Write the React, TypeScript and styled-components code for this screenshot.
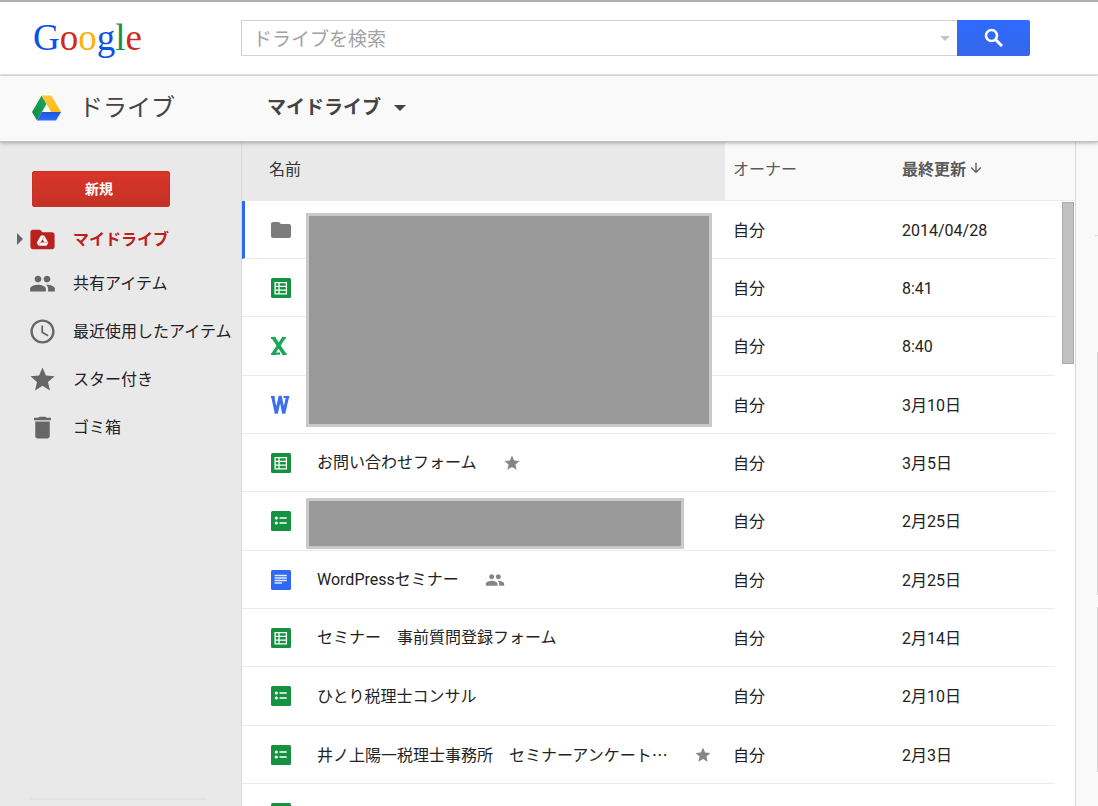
import React from "react";
import styled, { createGlobalStyle, css } from "styled-components";
import {
  MdAccessTime,
  MdArrowDownward,
  MdDelete,
  MdFolder,
  MdPeople,
  MdStar,
} from "react-icons/md";

const jp = `"Noto Sans CJK JP", sans-serif`;
const line = "#ebebeb";

const GlobalStyle = createGlobalStyle`
  *, *::before, *::after { box-sizing: border-box; }
  body {
    margin: 0;
    font: 16px/24px Roboto, ${jp};
    color: #222;
    background: #fff;
  }
  button, input { font: inherit; margin: 0; padding: 0; border: 0; background: none; }
  button { cursor: pointer; }
  svg { display: block; flex: none; }
`;

const Page = styled.div`
  display: flex;
  flex-direction: column;
  height: 100vh;
  overflow: hidden;
`;

/* ---------- top bar ---------- */

const TopBar = styled.header`
  display: flex;
  align-items: center;
  flex: none;
  height: 76px;
  padding: 0 68px 0 33px;
  border-top: 2px solid #b0b0b0;
  border-bottom: 2px solid #e6e6e6;
`;

const Logo = styled.a`
  width: 208px;
  flex: none;
  font: 37px/40px "Liberation Serif", serif;
  text-decoration: none;
`;

const Letter = styled.span<{ $color: string }>`
  color: ${(p) => p.$color};
`;

const SearchForm = styled.form`
  display: flex;
  flex: 1;
  height: 36px;
`;

const SearchBox = styled.div`
  display: flex;
  align-items: center;
  flex: 1;
  min-width: 0;
  border: 1px solid #d2d2d2;
  border-right: 0;
`;

const SearchInput = styled.input`
  flex: 1;
  min-width: 0;
  height: 34px;
  padding: 0 0 0 11px;
  font: 19px/34px ${jp};
  color: #222;
  outline: 0;
  &::placeholder { color: #a3a3a3; opacity: 1; }
`;

const SearchOptions = styled.button`
  display: flex;
  align-items: center;
  justify-content: center;
  width: 24px;
  height: 34px;
`;

const SearchButton = styled.button`
  display: flex;
  align-items: center;
  justify-content: center;
  width: 73px;
  color: #fff;
  border-radius: 0 2px 2px 0;
  background: linear-gradient(#2f6bff, #3567e8);
`;

const Caret = styled.span<{ $size: number; $color: string }>`
  border: ${(p) => p.$size}px solid transparent;
  border-top-color: ${(p) => p.$color};
  border-bottom: 0;
`;

/* ---------- product bar ---------- */

const ProductBar = styled.div`
  position: relative;
  z-index: 2;
  display: flex;
  align-items: center;
  flex: none;
  height: 66px;
  padding: 0 32px 2px;
  background: #f9f9f9;
  border-bottom: 1px solid #c0c0c0;
  box-shadow: 0 1px 4px rgba(0, 0, 0, 0.3);
`;

const Product = styled.a`
  display: flex;
  align-items: center;
  gap: 18px;
  width: 235px;
  font: 24px/32px ${jp};
  color: #444;
  text-decoration: none;
`;

const FolderButton = styled.button`
  display: flex;
  align-items: center;
  gap: 13px;
  font: bold 19px/32px ${jp};
  color: #444;
`;

/* Lifts a Japanese label slightly so that it centres on the icon beside it. */
const Label = styled.span`
  padding-bottom: 3px;
`;

/* ---------- body ---------- */

const Body = styled.div`
  display: flex;
  flex: 1;
  min-height: 0;
`;

const Sidebar = styled.aside`
  display: flex;
  flex-direction: column;
  flex: none;
  width: 242px;
  padding: 29px 0 6px;
  background: #e9e9e9;
  border-right: 1px solid #d9d9d9;
`;

const NewButton = styled.button`
  flex: none;
  width: 138px;
  height: 36px;
  margin: 0 0 12px 32px;
  padding: 0 4px 2px 0;
  font: bold 14px/32px ${jp};
  color: #fff;
  border-radius: 2px;
  border: 1px solid #c63226;
  background: linear-gradient(#d83528, #c53226);
`;

const NavLink = styled.a<{ $active?: boolean }>`
  display: flex;
  align-items: center;
  height: ${(p) => (p.$active ? 40 : 48)}px;
  padding-left: 28px;
  font-family: ${jp};
  white-space: nowrap;
  text-decoration: none;
  color: #222;
  ${(p) =>
    p.$active &&
    css`
      padding-left: 17px;
      color: #b9211c;
      font-weight: bold;
    `}
`;

const Expander = styled.span`
  width: 6px;
  margin-right: 5px;
  border: 6px solid transparent;
  border-left-color: #666;
  border-right: 0;
`;

const NavIcon = styled.span<{ $active?: boolean }>`
  display: flex;
  justify-content: center;
  width: 29px;
  margin-right: 16px;
  color: ${(p) => (p.$active ? "#b9211c" : "#666")};
`;

const SidebarRule = styled.hr`
  width: 175px;
  height: 2px;
  margin: auto 0 0 30px;
  border: 0;
  background: #e1e1e1;
`;

/* ---------- file list ---------- */

const ListPane = styled.main`
  position: relative;
  flex: 1;
  min-width: 0;
  overflow: hidden;
`;

const FileTable = styled.table`
  width: 100%;
  table-layout: fixed;
  border-collapse: separate;
  border-spacing: 0;
`;

const OwnerCol = styled.col`
  width: 169px;
`;
const DateCol = styled.col`
  width: 161px;
`;
const GutterCol = styled.col`
  width: 20px;
`;

const HeadCell = styled.th<{ $name?: boolean; $sorted?: boolean }>`
  height: 59px;
  padding: 0 0 6px ${(p) => (p.$name ? 27 : 8)}px;
  text-align: left;
  font-family: ${jp};
  font-weight: ${(p) => (p.$sorted ? "bold" : "normal")};
  color: ${(p) => (p.$name ? "#333" : "#5a5a5a")};
  background: ${(p) => (p.$name ? "#e9e9e9" : "#f9f9f9")};
  border-bottom: 1px solid ${line};
`;

const SortLabel = styled.span`
  display: flex;
  align-items: center;
  gap: 2px;
`;

const Cell = styled.td`
  padding: 2px 0 0 8px;
  border-bottom: 1px solid ${line};
`;

const NameCell = styled(Cell)`
  position: relative;
  padding: 0 0 0 27px;
`;

const FileRow = styled.tr<{ $selected?: boolean }>`
  height: 58px;
  &:nth-child(3n) { height: 59px; }
  ${(p) =>
    p.$selected &&
    css`
      ${NameCell} {
        border-left: 3px solid #2e68f0;
        padding-left: 24px;
      }
    `}
`;

const FileLine = styled.div`
  display: flex;
  align-items: center;
  white-space: nowrap;
`;

const FileIcon = styled.span`
  display: flex;
  justify-content: center;
  flex: none;
  width: 24px;
  margin-right: 24px;
  color: #7c7c7c;
`;

const FileName = styled.span`
  padding-top: 1px;
`;

const Badge = styled.span`
  margin-left: 26px;
  color: #858585;
`;

const Ellipsis = styled.span`
  font-family: ${jp};
`;

const Mask = styled.div<{ $left: number; $top: number; $w: number; $h: number }>`
  position: absolute;
  z-index: 1;
  left: ${(p) => p.$left}px;
  top: ${(p) => p.$top}px;
  width: ${(p) => p.$w}px;
  height: ${(p) => p.$h}px;
  background: #999;
  border: 3px solid #cacaca;
`;

const ScrollThumb = styled.div`
  position: absolute;
  top: 60px;
  right: 1px;
  width: 12px;
  height: 162px;
  background: #c1c1c1;
  border: 1px solid #aaa;
`;

/* ---------- details pane ---------- */

const Details = styled.aside`
  flex: none;
  width: 23px;
  padding-top: 93px;
  overflow: hidden;
  background: #f9f9f9;
  border-left: 1px solid #d9d9d9;
`;

const DetailsRule = styled.hr`
  height: 1px;
  margin: 0 0 116px 19px;
  border: 0;
  background: #ddd;
`;

const DetailsCard = styled.div<{ $h: number }>`
  height: ${(p) => p.$h}px;
  margin: 0 0 12px 21px;
  background: #d6d6d6;
`;

/* ---------- drawings ---------- */

const SearchIcon = () => (
  <svg width="20" height="20" viewBox="0 0 20 20" aria-hidden="true">
    <g fill="none" stroke="currentColor" strokeWidth="2.600">
      <circle cx="7.500" cy="7.500" r="5.500" />
      <path d="M11.500 11.500 18 18" strokeWidth="3.100" />
    </g>
  </svg>
);

const DriveLogo = () => (
  <svg width="29" height="26" viewBox="0 0 29 26" aria-hidden="true">
    <defs>
      <linearGradient id="dg" x1="0" y1="1" x2="1" y2="0">
        <stop offset="0" stopColor="#0a8a43" />
        <stop offset="1" stopColor="#22a858" />
      </linearGradient>
      <linearGradient id="db" x1="0" y1="0" x2="0" y2="1">
        <stop offset="0" stopColor="#1f55d8" />
        <stop offset="1" stopColor="#2f6bff" />
      </linearGradient>
      <linearGradient id="dy" x1="0" y1="0" x2="1" y2="1">
        <stop offset="0" stopColor="#ffc93a" />
        <stop offset="1" stopColor="#f9b916" />
      </linearGradient>
    </defs>
    <path d="M9.6 0.5 14.5 9 5 25.5 0 17Z" fill="url(#dg)" />
    <path d="M9.6 0.5H19.3L29 17H19.2Z" fill="url(#dy)" />
    <path d="M9.9 17H29L24 25.5H5Z" fill="url(#db)" />
  </svg>
);

const DriveFolder = () => (
  <svg width="29" height="29" viewBox="0 0 24 24" aria-hidden="true">
    <path
      fill="currentColor"
      d="M10 4H4c-1.100 0-2 .9-2 2v12c0 1.100.9 2 2 2h16c1.100 0 2-.9 2-2V8c0-1.100-.9-2-2-2h-8z"
    />
    <path
      d="M10.700 8.700h2.700l3.400 5.900-1.500 2.600H8.700l-1.500-2.600z"
      fill="#fff"
    />
    <path d="M12 11.700l1.600 2.700h-3.200z" fill="#b9211c" />
    <path
      d="M12 11.900l1.300-2.500M13.400 14.400h3M10.600 14.200l-1.600 2.700"
      fill="none"
      stroke="#b9211c"
      strokeWidth=".35"
    />
  </svg>
);

const SheetIcon = () => (
  <svg width="20" height="20" viewBox="0 0 20 20" aria-hidden="true">
    <rect width="20" height="20" rx="1.5" fill="#15923f" />
    <path
      d="M4.100 4.600H15.400V15.900H4.100ZM8 4.600V15.900M4.100 8.400H15.400M4.100 12.100H15.400"
      fill="none"
      stroke="#fff"
      strokeWidth="1.300"
    />
  </svg>
);

const FormIcon = () => (
  <svg width="20" height="20" viewBox="0 0 20 20" aria-hidden="true">
    <rect width="20" height="20" rx="1.5" fill="#15923f" />
    <circle cx="5.300" cy="7" r="1.600" fill="#fff" />
    <circle cx="5.300" cy="12" r="1.600" fill="#fff" />
    <path d="M8.500 7H15.700M8.500 12H15.700" stroke="#fff" strokeWidth="1.400" />
  </svg>
);

const DocIcon = () => (
  <svg width="20" height="20" viewBox="0 0 20 20" aria-hidden="true">
    <rect width="20" height="20" rx="1.5" fill="#2f68f5" />
    <path
      d="M3.600 5.500H15.800M3.600 8H15.800M3.600 10.500H15.800M3.600 13H11"
      stroke="#e3ebff"
      strokeWidth="1.300"
    />
  </svg>
);

const ExcelIcon = () => (
  <svg width="20" height="20" viewBox="0 0 20 20" aria-hidden="true">
    <g fill="none" stroke="#1ba558">
      <path d="M0 2H4.200M11 2H14.800M0 18.100H5M11.500 18.100H15.800" strokeWidth="1.800" />
      <path d="M2.300 1.500 13.600 18.500" strokeWidth="3.600" />
      <path d="M13 1.500 2 18" strokeWidth="3.200" />
      <path d="M2 17.600H9" strokeWidth="2.200" />
    </g>
  </svg>
);

const WordIcon = () => (
  <svg width="20" height="20" viewBox="0 0 20 20" aria-hidden="true">
    <g fill="none" stroke="#3a70ee">
      <path
        d="M1.600 1 5.300 18.500 9.200 1 12.700 18.500 16.500 2"
        strokeWidth="3.100"
        strokeLinejoin="bevel"
      />
      <path d="M0 2H3.500M12.500 2H18.300" strokeWidth="2" />
    </g>
  </svg>
);

const fileIcons = {
  folder: <MdFolder size={24} />,
  sheet: <SheetIcon />,
  form: <FormIcon />,
  doc: <DocIcon />,
  excel: <ExcelIcon />,
  word: <WordIcon />,
};

type FileItem = {
  kind: keyof typeof fileIcons;
  name?: string;
  cut?: boolean;
  badge?: "star" | "people";
  owner?: string;
  date?: string;
  mask?: [number, number, number, number];
};

const files: FileItem[] = [
  { kind: "folder", owner: "自分", date: "2014/04/28", mask: [61, 12, 406, 214] },
  { kind: "sheet", owner: "自分", date: "8:41" },
  { kind: "excel", owner: "自分", date: "8:40" },
  { kind: "word", owner: "自分", date: "3月10日" },
  { kind: "sheet", name: "お問い合わせフォーム", badge: "star", owner: "自分", date: "3月5日" },
  { kind: "form", owner: "自分", date: "2月25日", mask: [64, 6, 378, 51] },
  { kind: "doc", name: "WordPressセミナー", badge: "people", owner: "自分", date: "2月25日" },
  { kind: "sheet", name: "セミナー　事前質問登録フォーム", owner: "自分", date: "2月14日" },
  { kind: "form", name: "ひとり税理士コンサル", owner: "自分", date: "2月10日" },
  {
    kind: "form",
    name: "井ノ上陽一税理士事務所　セミナーアンケート",
    cut: true,
    badge: "star",
    owner: "自分",
    date: "2月3日",
  },
  { kind: "form" },
];

const navItems = [
  { label: "マイドライブ", icon: <DriveFolder />, active: true },
  { label: "共有アイテム", icon: <MdPeople size={27} /> },
  { label: "最近使用したアイテム", icon: <MdAccessTime size={29} /> },
  { label: "スター付き", icon: <MdStar size={29} /> },
  { label: "ゴミ箱", icon: <MdDelete size={29} /> },
];

const logoLetters: [string, string][] = [
  ["G", "#0b51ea"],
  ["o", "#cf2a20"],
  ["o", "#fdb10b"],
  ["g", "#0b51ea"],
  ["l", "#129347"],
  ["e", "#cf2a20"],
];

export default function App() {
  return (
    <Page>
      <GlobalStyle />
      <TopBar>
        <Logo href="#" aria-label="Google">
          {logoLetters.map(([ch, color], i) => (
            <Letter key={i} $color={color}>
              {ch}
            </Letter>
          ))}
        </Logo>
        <SearchForm role="search" onSubmit={(e) => e.preventDefault()}>
          <SearchBox>
            <SearchInput type="text" placeholder="ドライブを検索" aria-label="ドライブを検索" />
            <SearchOptions type="button" aria-label="検索オプション">
              <Caret $size={5} $color="#c4c4c4" />
            </SearchOptions>
          </SearchBox>
          <SearchButton type="submit" aria-label="検索">
            <SearchIcon />
          </SearchButton>
        </SearchForm>
      </TopBar>

      <ProductBar>
        <Product href="#">
          <DriveLogo />
          <Label>ドライブ</Label>
        </Product>
        <FolderButton type="button">
          <Label>マイドライブ</Label>
          <Caret $size={6} $color="#444" />
        </FolderButton>
      </ProductBar>

      <Body>
        <Sidebar>
          <NewButton type="button">新規</NewButton>
          <nav>
            {navItems.map((item) => (
              <NavLink key={item.label} href="#" $active={item.active}>
                {item.active && <Expander />}
                <NavIcon $active={item.active}>{item.icon}</NavIcon>
                <Label>{item.label}</Label>
              </NavLink>
            ))}
          </nav>
          <SidebarRule />
        </Sidebar>

        <ListPane>
          <FileTable>
            <colgroup>
              <col />
              <OwnerCol />
              <DateCol />
              <GutterCol />
            </colgroup>
            <thead>
              <tr>
                <HeadCell $name>名前</HeadCell>
                <HeadCell>オーナー</HeadCell>
                <HeadCell $sorted>
                  <SortLabel>
                    最終更新
                    <MdArrowDownward size={16} />
                  </SortLabel>
                </HeadCell>
                <HeadCell aria-hidden="true" />
              </tr>
            </thead>
            <tbody>
              {files.map((file, i) => (
                <FileRow key={i} $selected={i === 0}>
                  <NameCell>
                    <FileLine>
                      <FileIcon>{fileIcons[file.kind]}</FileIcon>
                      {file.name && (
                        <FileName>
                          {file.name}
                          {file.cut && <Ellipsis>…</Ellipsis>}
                        </FileName>
                      )}
                      {file.badge && (
                        <Badge>
                          {file.badge === "star" ? <MdStar size={18} /> : <MdPeople size={20} />}
                        </Badge>
                      )}
                    </FileLine>
                    {file.mask && (
                      <Mask
                        $left={file.mask[0]}
                        $top={file.mask[1]}
                        $w={file.mask[2]}
                        $h={file.mask[3]}
                      />
                    )}
                  </NameCell>
                  <Cell>{file.owner}</Cell>
                  <Cell>{file.date}</Cell>
                </FileRow>
              ))}
            </tbody>
          </FileTable>
          <ScrollThumb />
        </ListPane>

        <Details>
          <DetailsRule />
          <DetailsCard $h={243} />
          <DetailsCard $h={165} />
        </Details>
      </Body>
    </Page>
  );
}
